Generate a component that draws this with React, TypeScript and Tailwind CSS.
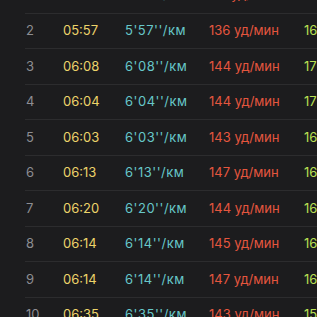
const rows = [
  { n: 1, time: "05:49", pace: "5'49''", hr: "131", cad: "164" },
  { n: 2, time: "05:57", pace: "5'57''", hr: "136", cad: "166" },
  { n: 3, time: "06:08", pace: "6'08''", hr: "144", cad: "170" },
  { n: 4, time: "06:04", pace: "6'04''", hr: "144", cad: "171" },
  { n: 5, time: "06:03", pace: "6'03''", hr: "143", cad: "168" },
  { n: 6, time: "06:13", pace: "6'13''", hr: "147", cad: "166" },
  { n: 7, time: "06:20", pace: "6'20''", hr: "144", cad: "165" },
  { n: 8, time: "06:14", pace: "6'14''", hr: "145", cad: "166" },
  { n: 9, time: "06:14", pace: "6'14''", hr: "147", cad: "166" },
  { n: 10, time: "06:35", pace: "6'35''", hr: "143", cad: "158" },
];

const SplitRow = ({ r, first }: { r: (typeof rows)[number]; first?: boolean }) => (
  <div className={`flex h-[35.5px] items-center ml-[25px] pl-[1px] ${first ? "" : "border-t border-[#2c2c2e]"}`}>
    <span className="w-[37px] shrink-0 text-[#8d8d92]">{r.n}</span>
    <span className="w-[62px] shrink-0 text-[#ecd36a]">{r.time}</span>
    <span className="w-[84px] shrink-0 text-[#67c7c9] tracking-[0.5px]">{r.pace}/км</span>
    <span className="w-[95px] shrink-0 text-[#e5563e]">{r.hr} уд/мин</span>
    <span className="shrink-0 text-[#b9e053]">{r.cad}</span>
  </div>
);

export default function App() {
  return (
    <div
      className="w-[317px] h-[317px] overflow-hidden bg-[#1c1c1e] text-[13px] whitespace-nowrap"
      style={{ fontFamily: "Inter, 'Noto Sans', sans-serif" }}
    >
      <div className="mt-[-23px]">
        {rows.map((r, i) => (
          <SplitRow key={r.n} r={r} first={i === 0} />
        ))}
      </div>
    </div>
  );
}
